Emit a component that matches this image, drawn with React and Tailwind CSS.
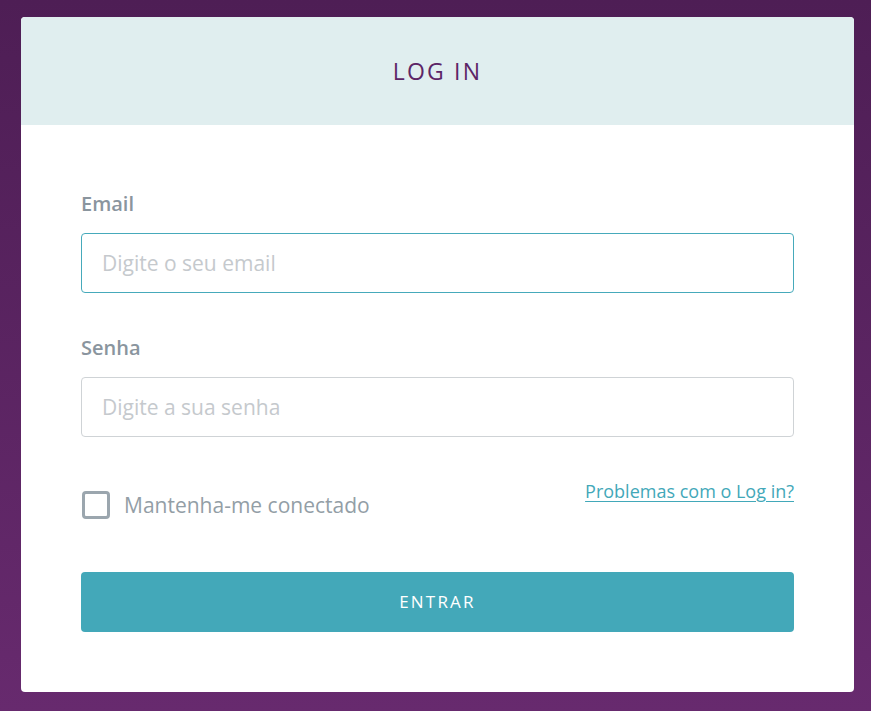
import React, { useState } from 'react';

const App = () => {
  const [remember, setRemember] = useState(false);

  return (
    <div className="min-h-screen w-full bg-gradient-to-b from-[#4e1e55] to-[#672a6e] pt-[17px] pb-[19px] font-['Open_Sans',sans-serif]">
      <div className="ml-[21px] w-[833px] bg-white rounded-[4px] overflow-hidden">
        {/* Header */}
        <div className="h-[108px] bg-[#e0eeef] flex items-center justify-center">
          <h1 className="text-[23px] tracking-[2.2px] text-[#5c2566] pt-[1px]">LOG IN</h1>
        </div>

        {/* Form */}
        <form className="px-[60px] pt-[65px] pb-[60px]" onSubmit={(e) => e.preventDefault()}>
          <label className="block text-[20px] leading-[28px] font-semibold text-[#8a959e]">Email</label>
          <input
            type="email"
            autoFocus
            placeholder="Digite o seu email"
            className="mt-[15px] block w-full h-[60px] px-[20px] border border-[#46aabb] rounded-[4px] text-[21px] text-[#555] caret-[#555] placeholder:text-[#c5c9cd] outline-none"
          />

          <label className="mt-[41px] block text-[20px] leading-[28px] font-semibold text-[#8a959e]">Senha</label>
          <input
            type="password"
            placeholder="Digite a sua senha"
            className="mt-[15px] block w-full h-[60px] px-[20px] border border-[#cfd3d6] rounded-[4px] text-[21px] text-[#555] placeholder:text-[#c5c9cd] outline-none"
          />

          <div className="mt-[41px] flex items-start justify-between">
            <label className="flex items-center mt-[13px] cursor-pointer">
              <span
                onClick={() => setRemember(!remember)}
                className="ml-[1px] w-[28px] h-[28px] border-[3px] border-[#9ba6ae] rounded-[4px] bg-white"
              />
              <span className="ml-[14px] text-[21px] leading-[28px] text-[#939ea6]">Mantenha-me conectado</span>
            </label>
            <a href="#" className="text-[18px] leading-[27px] text-[#42a8b9] underline underline-offset-[3px]">
              Problemas com o Log in?
            </a>
          </div>

          <button
            type="submit"
            className="mt-[53px] block w-full h-[60px] bg-[#43a8b9] rounded-[4px] text-white text-[17px] tracking-[2.2px]"
          >
            ENTRAR
          </button>
        </form>
      </div>
    </div>
  );
};

export default App;
